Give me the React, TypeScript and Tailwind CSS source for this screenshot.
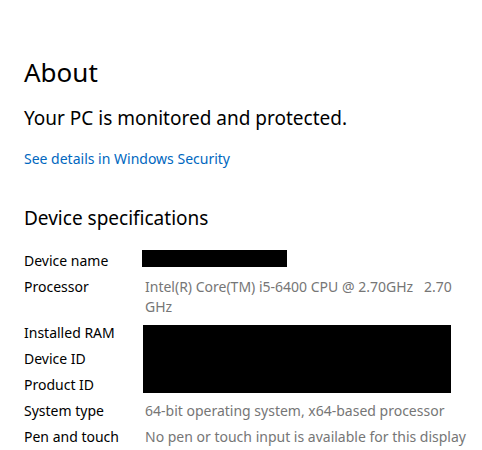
export default function App() {
  const rows: { label: string; value?: React.ReactNode; redact?: string }[] = [
    { label: 'Device name', redact: 'name' },
    {
      label: 'Processor',
      value: (
        <>
          Intel(R) Core(TM) i5-6400 CPU @ 2.70GHz&nbsp;&nbsp;&nbsp;2.70
          <br />
          GHz
        </>
      ),
    },
  ];
  const tail = [
    { label: 'System type', value: '64-bit operating system, x64-based processor' },
    { label: 'Pen and touch', value: 'No pen or touch input is available for this display' },
  ];

  return (
    <div className="w-[482px] h-[450px] bg-white pl-6 pt-[52px] overflow-hidden font-['Noto_Sans',sans-serif] text-black">
      <h1 className="text-[26px] leading-[40px] font-normal">About</h1>
      <p className="text-[19px] leading-[28px] mt-[12px]">Your PC is monitored and protected.</p>
      <a className="block text-[14px] leading-5 text-[#0067c0] mt-[17px]">See details in Windows Security</a>

      <h2 className="text-[19px] leading-[28px] mt-[35px]">Device specifications</h2>

      <div className="mt-[19px] flex flex-col gap-[6px] text-[14px] leading-5">
        {rows.map((r) => (
          <div key={r.label} className="flex">
            <div className="w-[121px] shrink-0">{r.label}</div>
            {r.redact ? (
              <div className="ml-[-3px] mt-[-1px] w-[145px] h-[17px] bg-black" />
            ) : (
              <div className="text-[#767676]">{r.value}</div>
            )}
          </div>
        ))}
        <div className="flex">
          <div className="w-[121px] shrink-0 flex flex-col gap-[6px]">
            <div>Installed RAM</div>
            <div>Device ID</div>
            <div>Product ID</div>
          </div>
          <div className="ml-[-2px] mt-[2px] w-[308px] h-[68px] bg-black" />
        </div>
        {tail.map((r) => (
          <div key={r.label} className="flex">
            <div className="w-[121px] shrink-0">{r.label}</div>
            <div className="text-[#767676] whitespace-nowrap">{r.value}</div>
          </div>
        ))}
      </div>
    </div>
  );
}
